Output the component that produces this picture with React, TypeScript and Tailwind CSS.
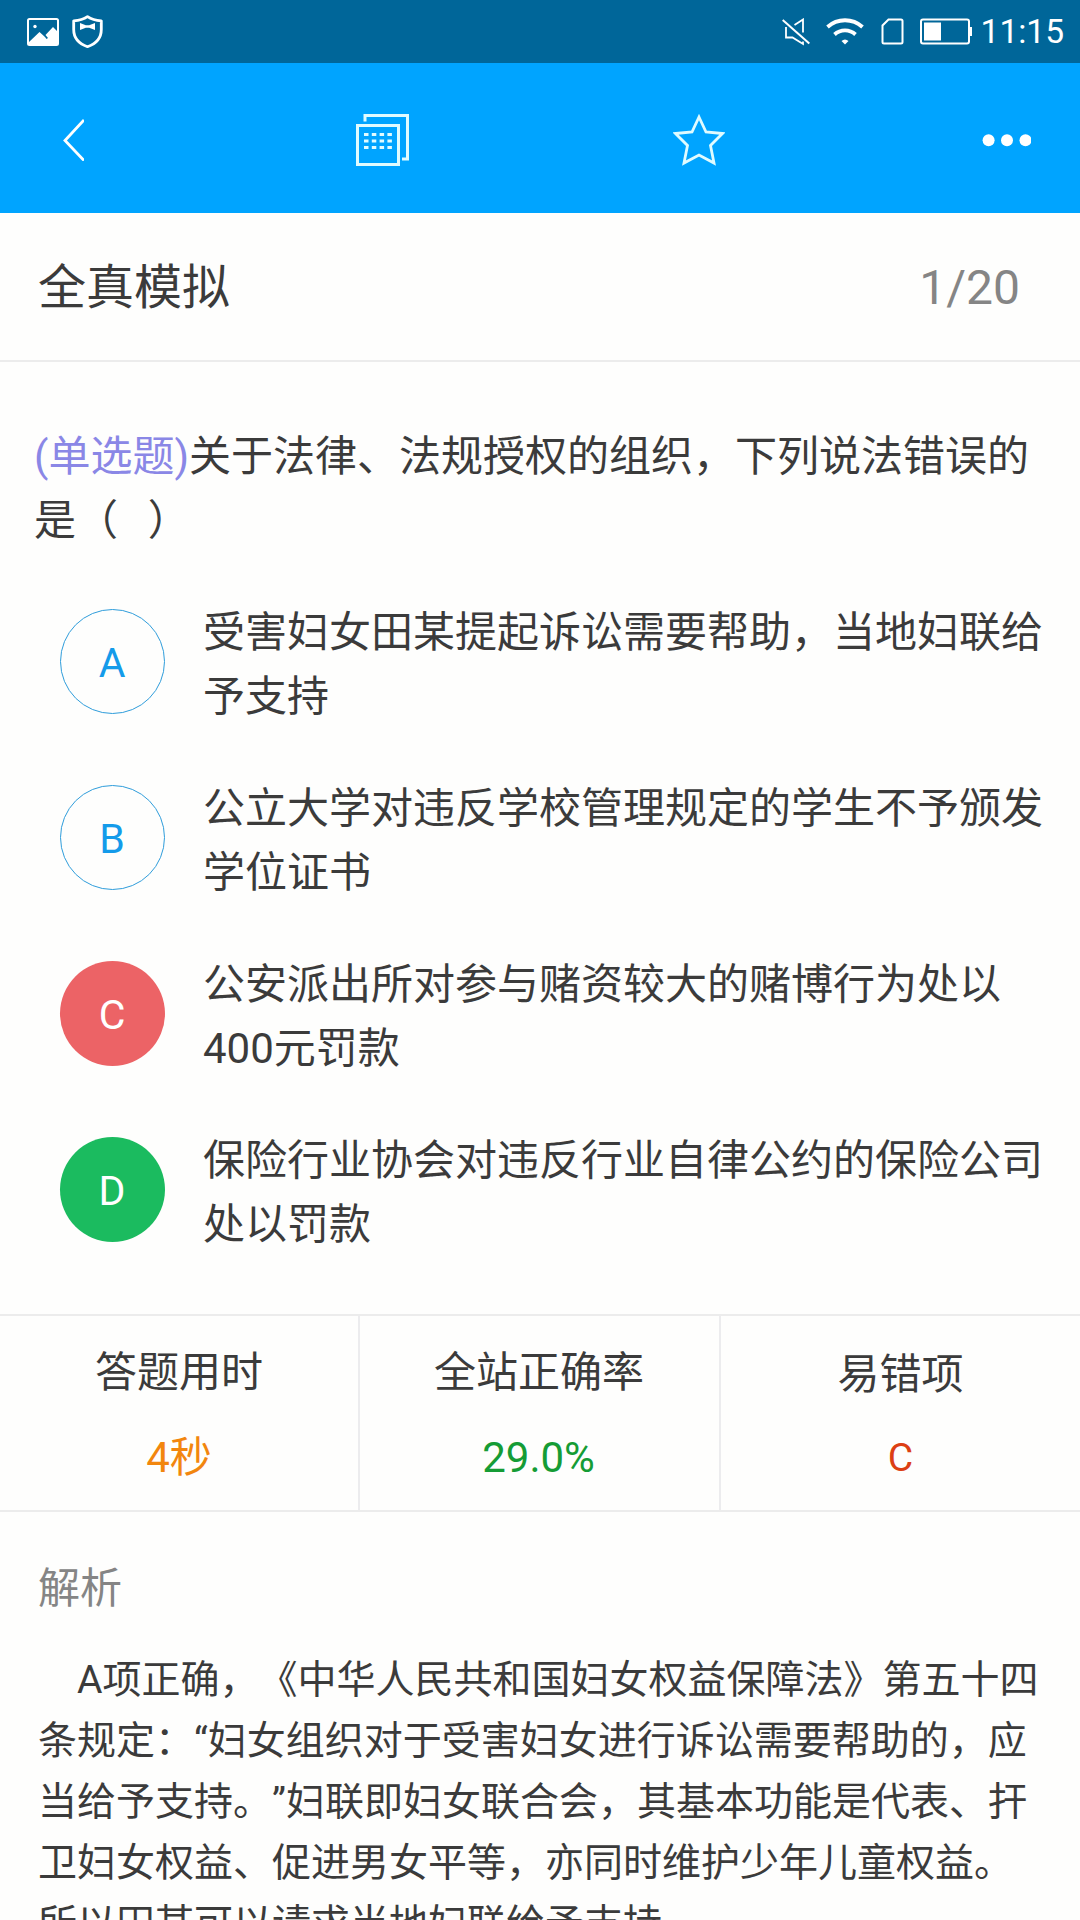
type OptionState = "idle" | "wrong" | "right";

interface Option {
  key: string;
  lines: string[];
  state: OptionState;
}

const options: Option[] = [
  { key: "A", lines: ["受害妇女田某提起诉讼需要帮助，当地妇联给", "予支持"], state: "idle" },
  { key: "B", lines: ["公立大学对违反学校管理规定的学生不予颁发", "学位证书"], state: "idle" },
  { key: "C", lines: ["公安派出所对参与赌资较大的赌博行为处以", "400元罚款"], state: "wrong" },
  { key: "D", lines: ["保险行业协会对违反行业自律公约的保险公司", "处以罚款"], state: "right" },
];

const badgeStyles: Record<OptionState, string> = {
  idle: "border border-[#2f9ddb] text-[#149bea]",
  wrong: "bg-[#ec6366] text-white",
  right: "bg-[#1bbb5f] text-white",
};

const analysis = [
  "　A项正确，《中华人民共和国妇女权益保障法》第五十四",
  "条规定：“妇女组织对于受害妇女进行诉讼需要帮助的，应",
  "当给予支持。”妇联即妇女联合会，其基本功能是代表、扞",
  "卫妇女权益、促进男女平等，亦同时维护少年儿童权益。",
  "所以田某可以请求当地妇联给予支持。",
];

function StatusBar() {
  return (
    <div className="flex h-[63px] items-center justify-between bg-[#006699] pr-4 pl-[27px] text-white">
      <div className="flex items-center gap-[13px]">
        <svg width="32" height="28" viewBox="0 0 32 28" fill="none">
          <rect x="1" y="1" width="30" height="26" rx="1.5" stroke="currentColor" strokeWidth="2" />
          <circle cx="8" cy="8.5" r="1.7" fill="currentColor" />
          <path d="M2 24 12.5 14l5.5 5 1.5 2 1.5-1-2.5-3L26 9l5 5v13H2Z" fill="currentColor" />
        </svg>
        <svg width="31" height="34" viewBox="0 0 31 34" fill="none">
          <path
            d="M15.5 1.7C12 4.1 7.5 5.5 1.7 5.8V14.5c0 9 6 14.5 13.800 17.200C23.300 29 29.300 23.500 29.300 14.500V5.800C23.500 5.500 19 4.100 15.500 1.700Z"
            stroke="currentColor"
            strokeWidth="2.8"
            strokeLinejoin="round"
          />
          <path d="M8 8 13.800 10.200h3.400L23 8v7L17.200 12.800h-3.400L8 15Z" fill="currentColor" />
        </svg>
      </div>
      <div className="flex items-center">
        <svg width="28" height="28" viewBox="0 0 28 28" fill="none" stroke="currentColor" strokeWidth="1.8">
          <path d="M.7 2 27.3 25.5" strokeWidth="2" />
          <path d="M12.5 7 21 1.5V14.5M4 9v10.500h6.500L21 26v-2.500" />
        </svg>
        <svg className="ml-4" width="38" height="28" viewBox="0 0 38 28" fill="none" stroke="currentColor">
          <path d="M1.5 9C11.5 0 26.500 0 36.500 9" strokeWidth="3.8" />
          <path d="M8.500 16.500c6-5.500 15-5.500 21 0" strokeWidth="3.8" />
          <path d="M15.500 23q3.500-3 7 0L19 26.500Z" fill="currentColor" stroke="none" />
        </svg>
        <svg className="ml-[17px]" width="23" height="28" viewBox="0 0 23 28" fill="none" stroke="currentColor" strokeWidth="2">
          <path d="M7.500 1.500H20q1.500 0 1.500 1.500v21q0 1.500-1.500 1.500H3q-1.500 0-1.500-1.500V7.500Z" />
        </svg>
        <svg className="ml-4" width="53" height="28" viewBox="0 0 53 28" fill="none">
          <rect x="1" y="1.500" width="48" height="24" rx="2" stroke="currentColor" strokeWidth="2" />
          <path d="M4 4.500h17v18H4ZM49 9h3v9h-3Z" fill="currentColor" />
        </svg>
        <span className="ml-2 text-[33.5px] leading-[40px]">11:15</span>
      </div>
    </div>
  );
}

function NavBar() {
  return (
    <header className="flex h-[150px] items-center bg-[#00a4ff] pt-0.5 pl-[63px] text-white">
      <svg width="21" height="44" viewBox="0 0 21 44" fill="none" stroke="currentColor" strokeWidth="2.8">
        <path d="M21 3 2 23.5 21 43.500" />
      </svg>
      <svg className="ml-[272px]" width="53" height="54" viewBox="0 0 53 54" fill="none" stroke="#e0fbff" strokeWidth="3">
        <path d="M9 9.500V3.500H51.500V47H46" />
        <rect x="1.500" y="13.500" width="41" height="39" />
        <path d="M8 22.500h30M8 29h30M8 35.500h30" strokeDasharray="4.500 3.300" />
      </svg>
      <svg className="ml-[264px]" width="52" height="54" viewBox="0 0 52 54" fill="none" stroke="#e0fbff" strokeWidth="2.800">
        <path d="M26 5 33 20 49.500 21.500 37.500 33.500 41 51 26 43 11 51 14.500 33.500 2.500 21.500 19 20Z" />
      </svg>
      <svg className="ml-[257px]" width="49" height="16" viewBox="0 0 49 16" fill="currentColor">
        <circle cx="6.600" cy="9.300" r="6" />
        <circle cx="25" cy="9.300" r="6" />
        <circle cx="43.500" cy="9.300" r="6" />
      </svg>
    </header>
  );
}

function OptionRow({ option }: { option: Option }) {
  return (
    <li className="flex h-32">
      <span
        className={`mt-2 flex size-[105px] shrink-0 items-center justify-center rounded-full pt-[5px] pr-px text-[41px] ${badgeStyles[option.state]}`}
      >
        {option.key}
      </span>
      <p className="ml-[38px] text-[42px] leading-[64px] whitespace-nowrap">
        {option.lines.map((line) => (
          <span key={line} className="block">
            {line}
          </span>
        ))}
      </p>
    </li>
  );
}

export default function App() {
  return (
    <div className="h-[1920px] w-[1080px] overflow-hidden bg-[#fefefd] font-['Roboto','Noto_Sans_CJK_SC',sans-serif] text-[#3b3b3b] [text-spacing-trim:space-all]">
      <StatusBar />
      <NavBar />

      <div className="flex h-[149px] items-center justify-between border-b-2 border-[#ececec] pt-0.5 pr-[60px] pl-[38px] text-[48px]">
        <h1>全真模拟</h1>
        <span className="text-[#858585]">1/20</span>
      </div>

      <main>
        <p className="mt-[63px] pl-[34px] text-[42px] leading-[64px] whitespace-pre">
          <span className="text-[#8a87e6]">(单选题)</span>
          关于法律、法规授权的组织，下列说法错误的
          <br />
          是（<span className="tracking-[-0.5px]">{"\u00a0\u00a0\u00a0"}</span>）
        </p>

        <ul className="mt-12 flex flex-col gap-12 pl-[60px]">
          {options.map((option) => (
            <OptionRow key={option.key} option={option} />
          ))}
        </ul>

        <section className="mt-[57px] flex h-[198px] border-y-2 border-[#ececec] text-center text-[42px] leading-[64px]">
          <div className="w-[360px] border-r-2 border-[#ececee] pt-[25px]">
            <div>答题用时</div>
            <div className="mt-[21px] text-[#f2860e]">4秒</div>
          </div>
          <div className="w-[361px] border-r-2 border-[#ececee] pt-[25px] pr-px">
            <div>全站正确率</div>
            <div className="mt-[21px] pr-px text-[#159c35]">29.0%</div>
          </div>
          <div className="flex-1 pt-[27px]">
            <div>易错项</div>
            <div className="mt-[19px] text-[39px] text-[#dc3f13]">C</div>
          </div>
        </section>

        <section className="pt-[45px] pl-[38px]">
          <h2 className="text-[42px] leading-[64px] text-[#858585]">解析</h2>
          <p className="mt-[29px] text-[39px] leading-[61px] whitespace-nowrap">
            {analysis.map((line) => (
              <span key={line} className="block">
                {line}
              </span>
            ))}
          </p>
        </section>
      </main>
    </div>
  );
}
